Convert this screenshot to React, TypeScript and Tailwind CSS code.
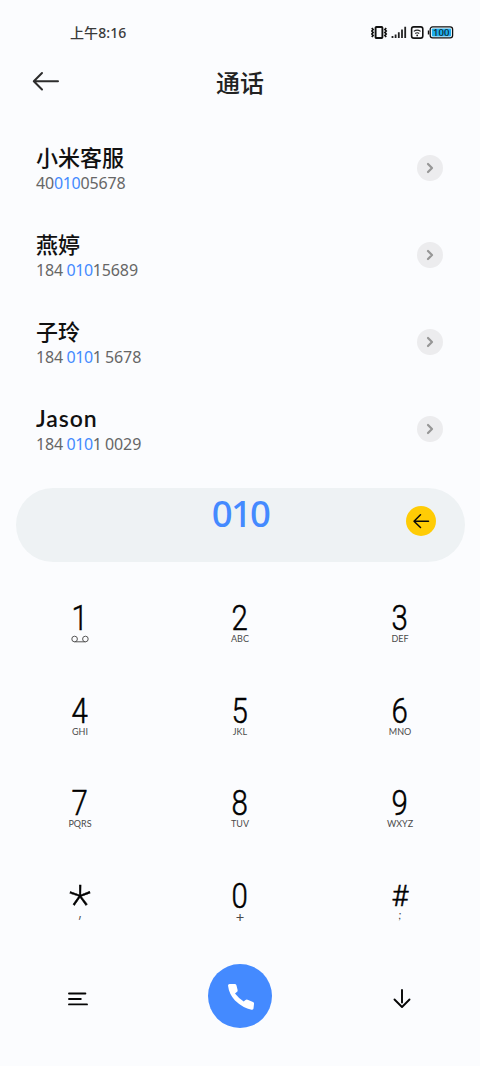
import type { ReactNode } from "react";

type Contact = {
  name: string;
  before: string;
  match: string;
  after: string;
};

type DialKey = {
  symbol: string;
  hint: ReactNode;
};

const contacts: Contact[] = [
  { name: "小米客服", before: "40", match: "010", after: "05678" },
  { name: "燕婷", before: "184 ", match: "010", after: "15689" },
  { name: "子玲", before: "184 ", match: "010", after: "1 5678" },
  { name: "Jason", before: "184 ", match: "010", after: "1 0029" },
];

const keys: DialKey[] = [
  { symbol: "1", hint: <VoicemailIcon /> },
  { symbol: "2", hint: "ABC" },
  { symbol: "3", hint: "DEF" },
  { symbol: "4", hint: "GHI" },
  { symbol: "5", hint: "JKL" },
  { symbol: "6", hint: "MNO" },
  { symbol: "7", hint: "PQRS" },
  { symbol: "8", hint: "TUV" },
  { symbol: "9", hint: "WXYZ" },
  { symbol: "*", hint: <span className="mb-[10px] font-['Noto_Sans',sans-serif] text-[16px] font-light">,</span> },
  { symbol: "0", hint: <span className="font-['Noto_Sans',sans-serif] text-[15px]">+</span> },
  { symbol: "#", hint: <span className="mb-[3px] text-[11px] italic">;</span> },
];

export default function App() {
  return (
    <main className="flex h-[1066px] w-[480px] flex-col overflow-hidden bg-[#fbfcfe] font-['Noto_Sans','Noto_Sans_CJK_SC',sans-serif] text-black">
      <StatusBar />

      <header className="grid h-[66px] shrink-0 grid-cols-3 items-center px-8">
        <button type="button" aria-label="返回">
          <svg width="28" height="20" viewBox="0 0 28 20" fill="none" stroke="#2c2c2c" strokeWidth="2" strokeLinecap="round" strokeLinejoin="round">
            <path d="M26 10.3H2M10 2 1.8 10.3 10 18.5" />
          </svg>
        </button>
        <h1 className="pt-[3px] text-center text-2xl font-medium text-[#222]">通话</h1>
      </header>

      <ul className="mt-[10px] shrink-0">
        {contacts.map((contact) => (
          <ContactRow key={contact.name} contact={contact} />
        ))}
      </ul>

      <div className="mx-[15.5px] mt-[16px] grid h-[74px] shrink-0 grid-cols-3 rounded-full bg-[#eef2f4]">
        <span className="col-start-2 pl-[1px] text-center font-['Noto_Sans',sans-serif] text-[36.5px] leading-[50px] font-medium tracking-[-1.7px] text-[#448aff]">
          010
        </span>
        <button type="button" aria-label="删除" className="mt-[18px] mr-[28.5px] flex size-[30px] items-center justify-center justify-self-end rounded-full bg-[#ffcc05]">
          <svg width="18" height="16" viewBox="0 0 18 16" fill="none" stroke="#0a0a0a" strokeWidth="1.5" strokeLinecap="round" strokeLinejoin="round">
            <path d="M16.5 8.2H2M8.5 1.7 2 8.2l6.5 6.3" />
          </svg>
        </button>
      </div>

      <div className="mt-[42px] grid shrink-0 grid-cols-3 grid-rows-[92.6px_92.6px_92.6px_82.7px]">
        {keys.map((key) => (
          <DialButton key={key.symbol} dialKey={key} />
        ))}
      </div>

      <footer className="grid shrink-0 grid-cols-3 items-center justify-items-center">
        <button type="button" aria-label="菜单" className="mt-[6px] mr-[5px]">
          <svg width="20" height="14" viewBox="0 0 20 14" fill="none" stroke="#050505" strokeWidth="1.9" strokeLinecap="round">
            <path d="M1 1.5h16.4M1 7h11.8M1 12.4h18" />
          </svg>
        </button>
        <button type="button" aria-label="拨打" className="flex size-16 items-center justify-center rounded-full bg-[#448aff]">
          <svg width="26" height="26" viewBox="0 0 26 26" fill="white" className="mt-[1px] ml-[1px]">
            <path d="M0 1.5Q0 0 1.5 0H7Q8.3 0 8.5 1.5L9.6 6Q9.8 7.3 8.8 8L7 9.4Q11 14.5 15.7 17.5L17.5 16Q18.4 15.3 19.6 15.8L25 18Q26.3 18.5 26 20L25.5 24.5Q25.2 26 23.5 25.8Q15 24 7 16.5Q1 10 0 1.5Z" />
          </svg>
        </button>
        <button type="button" aria-label="收起" className="mt-[6px] ml-[4px]">
          <svg width="18" height="20" viewBox="0 0 18 20" fill="none" stroke="#050505" strokeWidth="1.9" strokeLinecap="round" strokeLinejoin="round">
            <path d="M9 1v12.5M1.5 10.5 9 18l7.5-7.5" />
          </svg>
        </button>
      </footer>
    </main>
  );
}

function StatusBar() {
  return (
    <div className="flex h-12 shrink-0 items-center justify-between pt-[17px] pr-[26px] pl-[70px]">
      <span className="text-sm font-medium tracking-[0.1px] text-[#3a3a3a]">上午8:16</span>
      <svg width="83" height="15" viewBox="0 0 83 15" fill="none">
        {/* vibrate */}
        <rect x="4.6" y="2" width="6.8" height="11" rx="0.8" stroke="#111" strokeWidth="1.9" />
        <path d="m.8 3 1.3 1.5L.8 6l1.3 1.5L.8 9l1.3 1.5L.8 12M15.2 3l-1.3 1.5L15.2 6l-1.3 1.5L15.2 9l-1.3 1.5 1.3 1.5" stroke="#111" strokeWidth="1.7" />
        {/* signal */}
        <path d="M21.5 11v2M24.6 9.5V13M27.8 7.2V13M31 4.6V13M34.2 1.7V13" stroke="#222" strokeWidth="1.8" />
        {/* wifi */}
        <rect x="40.6" y="1.9" width="11.2" height="11.2" rx="2.2" stroke="#111" strokeWidth="1.6" />
        <path d="M42.8 6.4q3.4-2.6 6.8 0M44.2 8.5q2-1.5 4 0" stroke="#222" strokeWidth="1.1" />
        <circle cx="46.2" cy="10.4" r="0.9" fill="#222" />
        {/* battery */}
        <rect x="59.2" y="1.9" width="22.4" height="11" rx="2.4" fill="white" stroke="#111" strokeWidth="1.3" />
        <rect x="60.8" y="3.4" width="19.3" height="8" rx="0.8" fill="#1eaeed" />
        <path d="M57.5 5.5v4" stroke="#111" strokeWidth="1.4" />
        <text x="70.2" y="10.8" textAnchor="middle" fontFamily="Noto Sans, sans-serif" fontSize="9.5" fontWeight="500" fill="#10262f">
          100
        </text>
      </svg>
    </div>
  );
}

function ContactRow({ contact }: { contact: Contact }) {
  return (
    <li className="flex h-[87px] items-center justify-between pr-[37px] pl-9">
      <div className="pt-[3px]">
        <p className="font-['Lato','Noto_Sans_CJK_SC',sans-serif] text-[22px] leading-[28px] font-medium text-[#111]">
          {contact.name === "Jason" ? <span className="text-[23px] font-semibold tracking-[0.9px]">{contact.name}</span> : contact.name}
        </p>
        <p className="text-base leading-[23px] tracking-[-0.1px] [word-spacing:-0.8px] whitespace-pre text-[#666]">
          {contact.before}
          <span className="tracking-[-0.4px] text-[#448aff]">{contact.match}</span>
          {contact.after}
        </p>
      </div>
      <button type="button" aria-label="详情" className="flex size-[26px] items-center justify-center rounded-full bg-[#ececee]">
        <svg width="8" height="12" viewBox="0 0 8 12" fill="none" stroke="#969696" strokeWidth="2.2" strokeLinecap="round" strokeLinejoin="round">
          <path d="m2 2 4 4-4 4" />
        </svg>
      </button>
    </li>
  );
}

function DialButton({ dialKey }: { dialKey: DialKey }) {
  return (
    <button type="button" className="flex h-full flex-col items-center">
      <span className={symbolClass(dialKey.symbol)}>{dialKey.symbol}</span>
      <span className="flex h-[10px] items-center font-['Lato',sans-serif] text-[9px] leading-[10px] text-[#4a4a4a]">{dialKey.hint}</span>
    </button>
  );
}

function VoicemailIcon() {
  return (
    <svg width="18" height="8" viewBox="0 0 18 8" fill="none" stroke="#555" strokeWidth="1">
      <circle cx="3.6" cy="4" r="2.8" />
      <circle cx="14.4" cy="4" r="2.8" />
      <path d="M3.6 6.8h10.8" />
    </svg>
  );
}

function symbolClass(symbol: string) {
  if (symbol === "*") {
    return "mt-[-3px] h-[33px] font-['Roboto',sans-serif] text-[52px] leading-[52px] font-extralight [-webkit-text-stroke:0.4px_black]";
  }
  if (symbol === "#") {
    return "h-[30px] font-['Roboto',sans-serif] text-[29px] leading-[29px] font-light [-webkit-text-stroke:0.5px_black]";
  }
  return "h-[30px] scale-x-[0.84] font-['Roboto',sans-serif] text-[35px] leading-[30px] font-light [-webkit-text-stroke:0.5px_black]";
}
